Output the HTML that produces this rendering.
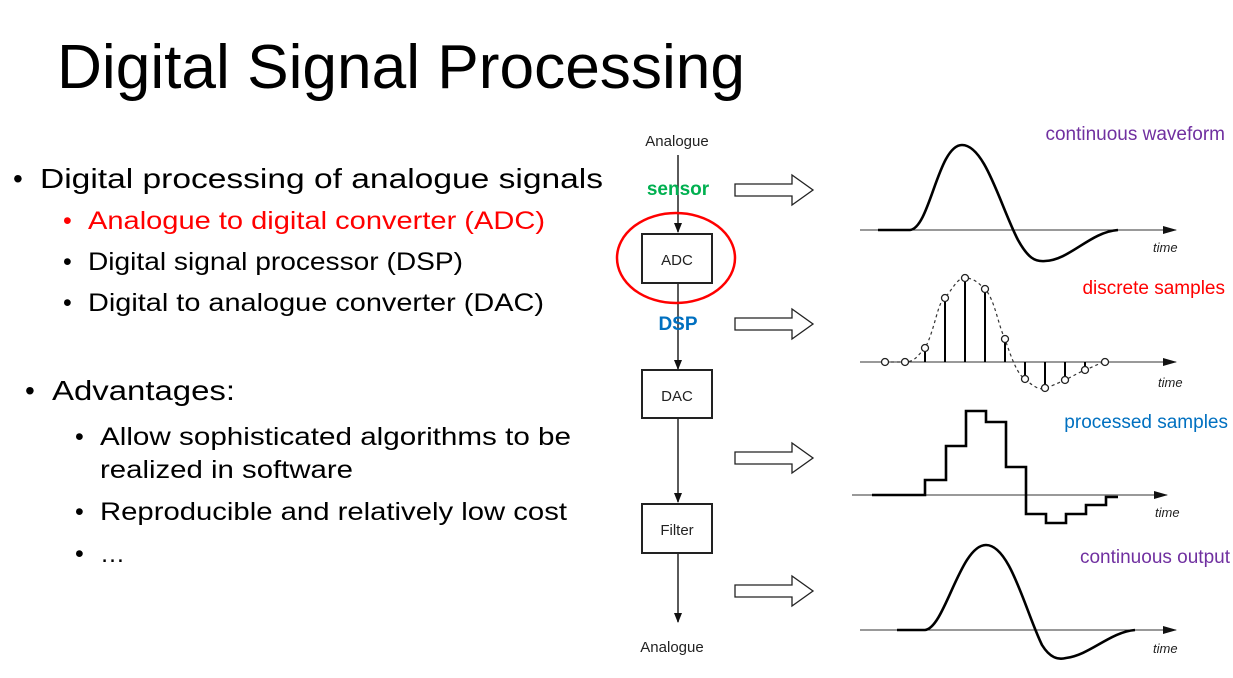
<!DOCTYPE html>
<html><head><meta charset="utf-8"><style>
html,body{margin:0;padding:0;background:#fff;width:1233px;height:678px;overflow:hidden}
svg{display:block;font-family:"Liberation Sans",sans-serif}
</style></head><body>
<svg width="1233" height="678" viewBox="0 0 1233 678" xmlns="http://www.w3.org/2000/svg">
<defs>
<marker id="ah" markerWidth="10" markerHeight="10" refX="9" refY="5" orient="auto" markerUnits="userSpaceOnUse"><path d="M0,1 L10,5 L0,9 Z" fill="#111"/></marker>
<marker id="ax" markerWidth="14" markerHeight="10" refX="13" refY="5" orient="auto" markerUnits="userSpaceOnUse"><path d="M0,1 L14,5 L0,9 Z" fill="#111"/></marker>
</defs>
<text x="57" y="88" font-size="62" textLength="688" lengthAdjust="spacingAndGlyphs" fill="#000">Digital Signal Processing</text>

<g font-size="28" fill="#000">
<text x="13" y="188">•</text>
<text x="40" y="188" textLength="563" lengthAdjust="spacingAndGlyphs">Digital processing of analogue signals</text>
</g>
<g font-size="25">
<text x="63" y="229" fill="#f00">•</text>
<text x="88" y="229" fill="#f00" textLength="457" lengthAdjust="spacingAndGlyphs">Analogue to digital converter (ADC)</text>
<text x="63" y="270">•</text>
<text x="88" y="270" textLength="375" lengthAdjust="spacingAndGlyphs">Digital signal processor (DSP)</text>
<text x="63" y="311">•</text>
<text x="88" y="311" textLength="456" lengthAdjust="spacingAndGlyphs">Digital to analogue converter (DAC)</text>
</g>
<g font-size="28">
<text x="25" y="400">•</text>
<text x="52" y="400" textLength="183" lengthAdjust="spacingAndGlyphs">Advantages:</text>
</g>
<g font-size="25">
<text x="75" y="445">•</text>
<text x="100" y="445" textLength="471" lengthAdjust="spacingAndGlyphs">Allow sophisticated algorithms to be</text>
<text x="100" y="478" textLength="253" lengthAdjust="spacingAndGlyphs">realized in software</text>
<text x="75" y="520">•</text>
<text x="100" y="520" textLength="467" lengthAdjust="spacingAndGlyphs">Reproducible and relatively low cost</text>
<text x="75" y="562">•</text>
<text x="100" y="562">…</text>
</g>

<!-- block diagram -->
<g stroke="#222" stroke-width="1.5" fill="none">
<line x1="678" y1="155" x2="678" y2="232" marker-end="url(#ah)"/>
<rect x="642" y="234" width="70" height="49" stroke-width="2"/>
<line x1="678" y1="283" x2="678" y2="369" marker-end="url(#ah)"/>
<rect x="642" y="370" width="70" height="48" stroke-width="2"/>
<line x1="678" y1="418" x2="678" y2="502" marker-end="url(#ah)"/>
<rect x="642" y="504" width="70" height="49" stroke-width="2"/>
<line x1="678" y1="553" x2="678" y2="622" marker-end="url(#ah)"/>
</g>
<g font-size="15" fill="#222" text-anchor="middle">
<text x="677" y="146">Analogue</text>
<text x="677" y="265">ADC</text>
<text x="677" y="401">DAC</text>
<text x="677" y="535">Filter</text>
<text x="672" y="652">Analogue</text>
</g>
<text x="678" y="195" font-size="19" font-weight="bold" fill="#00b050" text-anchor="middle">sensor</text>
<text x="678" y="330" font-size="19" font-weight="bold" fill="#0070c0" text-anchor="middle">DSP</text>
<ellipse cx="676" cy="258" rx="59" ry="45" fill="none" stroke="#f00" stroke-width="2.5"/>

<!-- hollow arrows -->
<g fill="#fff" stroke="#222" stroke-width="1.3">
<path d="M735,184 h57 v-9 l21,15 l-21,15 v-9 h-57 z"/>
<path d="M735,318 h57 v-9 l21,15 l-21,15 v-9 h-57 z"/>
<path d="M735,452 h57 v-9 l21,15 l-21,15 v-9 h-57 z"/>
<path d="M735,585 h57 v-9 l21,15 l-21,15 v-9 h-57 z"/>
</g>

<!-- graphs -->
<g stroke="#333" stroke-width="1" fill="none">
<line x1="860" y1="230" x2="1176" y2="230" marker-end="url(#ax)"/>
<line x1="860" y1="362" x2="1176" y2="362" marker-end="url(#ax)"/>
<line x1="852" y1="495" x2="1167" y2="495" marker-end="url(#ax)"/>
<line x1="860" y1="630" x2="1176" y2="630" marker-end="url(#ax)"/>
</g>
<g stroke="#000" stroke-width="2.6" fill="none">
<path d="M878,230 L910,230 C930,228 938,145 962,145 C985,145 1000,205 1018,240 C1028,258 1035,262 1045,261 C1070,260 1090,232 1118,230"/>
<path d="M897,630 L925,630 C945,628 960,545 986,545 C1010,545 1025,610 1042,645 C1050,658 1058,660 1066,658 C1090,655 1110,632 1135,630"/>
<path d="M872,495 H925 V480 H946 V446 H966 V411 H986 V422 H1006 V467 H1026 V514 H1046 V523 H1066 V514 H1086 V505 H1106 V497 H1118"/>
</g>
<g stroke="#000" stroke-width="2">
<line x1="925" y1="362" x2="925" y2="348"/>
<line x1="945" y1="362" x2="945" y2="298"/>
<line x1="965" y1="362" x2="965" y2="278"/>
<line x1="985" y1="362" x2="985" y2="289"/>
<line x1="1005" y1="362" x2="1005" y2="339"/>
<line x1="1025" y1="362" x2="1025" y2="379"/>
<line x1="1045" y1="362" x2="1045" y2="388"/>
<line x1="1065" y1="362" x2="1065" y2="380"/>
<line x1="1085" y1="362" x2="1085" y2="370"/>
</g>
<path d="M885,362 L905,362 C915,362 918,355 925,348 C935,330 938,300 945,298 C955,285 958,278 965,278 C975,278 980,285 985,289 C995,300 998,325 1005,339 C1012,360 1018,375 1025,379 C1035,388 1040,390 1045,388 C1055,385 1060,382 1065,380 C1075,375 1080,372 1085,370 C1095,366 1100,363 1105,362" fill="none" stroke="#333" stroke-width="1.2" stroke-dasharray="3,3"/>
<g fill="#fff" stroke="#222" stroke-width="1.3">
<circle cx="885" cy="362" r="3.5"/><circle cx="905" cy="362" r="3.5"/><circle cx="925" cy="348" r="3.5"/>
<circle cx="945" cy="298" r="3.5"/><circle cx="965" cy="278" r="3.5"/><circle cx="985" cy="289" r="3.5"/>
<circle cx="1005" cy="339" r="3.5"/><circle cx="1025" cy="379" r="3.5"/><circle cx="1045" cy="388" r="3.5"/>
<circle cx="1065" cy="380" r="3.5"/><circle cx="1085" cy="370" r="3.5"/><circle cx="1105" cy="362" r="3.5"/>
</g>
<g font-size="13" font-style="italic" fill="#222">
<text x="1153" y="252">time</text>
<text x="1158" y="387">time</text>
<text x="1155" y="517">time</text>
<text x="1153" y="653">time</text>
</g>
<g font-size="19" text-anchor="end">
<text x="1225" y="140" fill="#7030a0">continuous waveform</text>
<text x="1225" y="294" fill="#f00">discrete samples</text>
<text x="1228" y="428" fill="#0070c0">processed samples</text>
<text x="1230" y="563" fill="#7030a0">continuous output</text>
</g>
</svg>
</body></html>
